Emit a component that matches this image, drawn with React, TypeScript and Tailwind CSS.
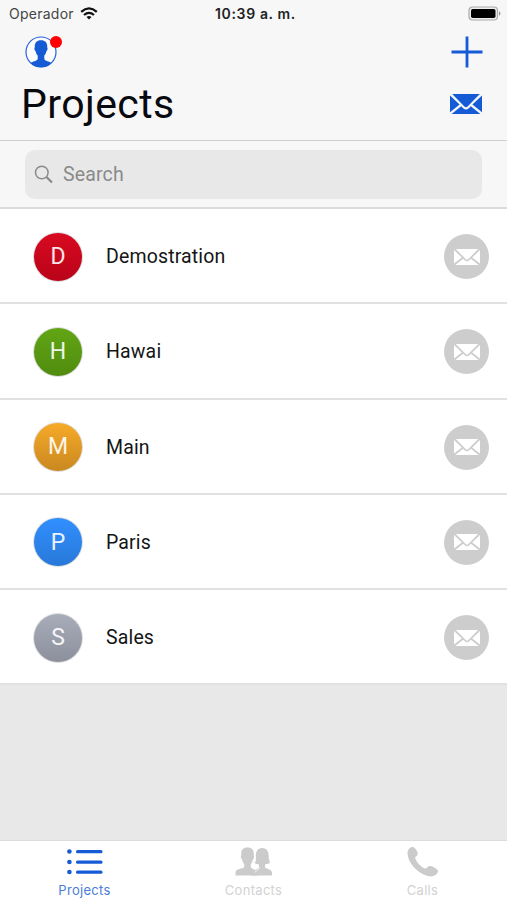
import React from "react";

const projects = [
  { name: "Demostration", color: "from-[#d80b21] to-[#b90319]" },
  { name: "Hawai", color: "from-[#61a615] to-[#508c0e]" },
  { name: "Main", color: "from-[#f6aa28] to-[#ca8820]" },
  { name: "Paris", color: "from-[#318fff] to-[#2879d8]" },
  { name: "Sales", color: "from-[#a8adba] to-[#8c909c]" },
];

function Envelope({ className }: { className: string }) {
  return (
    <svg viewBox="0 0 32 20" preserveAspectRatio="none" className={className} fill="currentColor">
      <path d="M2.2 0h27.6L17.600 12.600q-1.600 1.500-3.200 0z" />
      <path d="M0 1.400 9.600 10.600 0 18.200zM32 1.400 22.400 10.600 32 18.200z" />
      <path d="M1.600 20 11.200 12.200l2 2q2.800 2.500 5.600 0l2-2L30.400 20z" />
    </svg>
  );
}

function Wifi() {
  return (
    <svg viewBox="0 0 18 13" className="ml-[6px] h-[13px] w-[18px]" fill="none" stroke="#111" strokeWidth="2.3">
      <path d="M1.2 4.8Q9-2 16.8 4.8M4 8Q9 3.7 14 8" />
      <path d="M9 12.4 6.5 9.9Q9 8 11.5 9.9z" fill="#111" stroke="none" />
    </svg>
  );
}

function Profile() {
  return (
    <div className="relative h-8 w-8">
      <svg viewBox="0 0 32 32" className="h-8 w-8">
        <circle cx="16" cy="16" r="15" fill="#fbfbfb" stroke="#2764d8" strokeWidth="1.2" />
        <path
          d="M16 4.200c4.600 0 6.600 2.900 6.200 7.200.8.500.300 3.300-.7 3.600-.5 2.200-1.200 3.500-2.200 4.600v3.300c.6 2.300 5.200 2.100 7.300 4.100A15.200 15.200 0 0 1 5.400 27c2.100-2 6.700-1.800 7.300-4.100v-3.300c-1-1.100-1.700-2.400-2.200-4.600-1-.3-1.500-3.100-.7-3.600-.4-4.300 1.600-7.200 6.200-7.200z"
          fill="#155bd5"
        />
      </svg>
      <span className="absolute top-0 left-[25px] h-[12px] w-[12px] rounded-full bg-[#ff0007]" />
    </div>
  );
}

function ListIcon() {
  return (
    <svg viewBox="0 0 36 27" className="h-[27px] w-9" fill="#155bd5">
      <circle cx="2.400" cy="3.500" r="2.300" />
      <circle cx="2.400" cy="14" r="2.300" />
      <circle cx="2.400" cy="24" r="2.300" />
      <rect x="9" y="2" width="26.500" height="3.200" rx="1.500" />
      <rect x="9" y="12.500" width="26.500" height="3.200" rx="1.500" />
      <rect x="9" y="22.500" width="26.500" height="3.200" rx="1.500" />
    </svg>
  );
}

function PeopleIcon() {
  return (
    <svg viewBox="0 0 38 29" className="h-[29px] w-[38px]" fill="#cbcbcb">
      <path d="M27 1c5 0 6.700 3.500 6.700 8.500 0 3 .8 4.500 1.300 6-1.500 1.500-3.500 1.800-5 1.900v3.100c2 1.700 7 1.800 7 5.500v2.500H17v-2c1-3.500 5.500-4 7-6v-3.100c-1.500-.1-3.500-.4-4.500-1.700.8-2 1.300-3.500 1.300-6.200 0-5 1.700-8.500 6.200-8.500z" />
      <path
        d="M12.500.600c5 0 6.700 3 6.200 7.700 1 .6.400 3.500-.7 4-.4 2.400-1.200 3.500-2.200 4.600v3.400c1.200 2 5.500 2.200 6.200 4.500v3.700H.500v-3c0-3.800 7.200-3.700 8.700-5.200v-3.400c-1-1.100-1.800-2.200-2.200-4.600-1.100-.5-1.700-3.400-.7-4C5.800 3.600 7.500.6 12.500.6z"
      />
      <path d="M19.500 25.500 25.500 20.500M20.500 9v6" stroke="white" strokeWidth=".7" />
    </svg>
  );
}

function PhoneIcon() {
  return (
    <svg viewBox="0 0 32 32" className="h-8 w-8" fill="#cbcbcb">
      <path d="M2 2.800C3.800 1 5.500.600 6.800 1.400c1.900 1.200 3.500 3.600 3.900 5.700.3 1.600-.4 2.600-1.800 3.400-.8.500-.9 1.200-.5 2.200 1.700 4 5 7.500 8.700 9.500 1.200.6 2 .5 2.800-.4 1.500-1.700 3.300-2.300 5.500-1.200 2 1 4.200 2.300 5.100 3.300 1 1.200.5 2.400-.7 3.800-2.800 3.300-7.100 3.500-12.300 1.100C8.900 24.900 1.800 17.300.7 8.700.3 6.200.6 4.300 2 2.800z" />
    </svg>
  );
}

export default function App() {
  return (
    <div className="flex h-[900px] w-[507px] flex-col overflow-hidden bg-[#e8e8e8] font-['Roboto',sans-serif]">
      <header className="h-[141px] shrink-0 border-b border-[#d0d0d0] bg-[#f7f7f7]">
        <div className="grid h-[27px] grid-cols-[1fr_auto_1fr] items-center pr-[5px] pl-[9px] font-['Inter',sans-serif]">
          <div className="flex items-center text-[14px] text-[#444]">
            <span className="tracking-[0.250px]">Operador</span>
            <Wifi />
          </div>
          <span className="text-[14px] font-semibold tracking-[0.650px] text-[#222]">10:39 a. m.</span>
          <svg viewBox="0 0 34 16" className="h-4 w-[34px] justify-self-end">
            <rect x="1" y="1" width="28.500" height="13" rx="3.500" fill="#eee" stroke="#aaa" strokeWidth="1.200" />
            <rect x="3" y="3" width="24.500" height="9" rx="1.800" fill="#000" />
            <path d="M31 5q3 2.500 0 5z" fill="#999" />
          </svg>
        </div>
        <div className="flex h-[50px] items-center justify-between pr-6 pl-[25px]">
          <Profile />
          <svg viewBox="0 0 32 32" className="h-8 w-8" fill="none" stroke="#155bd5" strokeWidth="2.800">
            <path d="M16 .500v31M.500 16h31" />
          </svg>
        </div>
        <div className="flex h-[54px] items-center justify-between pr-[25px] pl-[21px]">
          <h1 className="text-[41px] leading-[52px] tracking-[0.400px] text-[#080a10]">Projects</h1>
          <Envelope className="h-5 w-8 text-[#155bd5]" />
        </div>
      </header>
      <div className="h-[68px] shrink-0 border-b-2 border-[#dadada] bg-[#f7f7f7] px-[25px] pt-[9px]">
        <div className="flex h-[49px] items-center rounded-[10px] bg-[#e8e8e8] pl-[9px] text-[#8a8a8a]">
          <svg viewBox="0 0 20 20" className="h-5 w-5" fill="none" stroke="currentColor">
            <circle cx="7.800" cy="7.500" r="6.300" strokeWidth="1.500" />
            <path d="m12.500 12 5.500 5.500" strokeWidth="2.200" />
          </svg>
          <span className="ml-[9px] text-[19.500px] tracking-[0.150px]">Search</span>
        </div>
      </div>
      <main>
        {projects.map((p) => (
          <div key={p.name} className="flex h-[95.250px] items-center border-b-2 border-[#e1e1e1] bg-white pt-[2px] pr-[18px] pl-[33px]">
            <div className="h-[50px] w-[50px] rounded-full bg-[#dedede] p-px">
              <div className={`flex h-12 w-12 items-center justify-center rounded-full bg-linear-to-b pt-px text-[23px] text-white/90 ${p.color}`}>
                {p.name[0]}
              </div>
            </div>
            <span className="ml-[23px] flex-1 text-[19.500px] tracking-[0.150px] text-[#151515]">{p.name}</span>
            <div className="flex h-[45px] w-[45px] items-center justify-center rounded-full bg-[#cdcdcd]">
              <Envelope className="h-4 w-[26px] text-white" />
            </div>
          </div>
        ))}
      </main>
      <nav className="mt-auto grid h-[60px] shrink-0 grid-cols-3 border-t border-[#dcdcdc] bg-white text-[13px] leading-[16px] tracking-[0.300px] text-[#d2d2d2] font-['Inter',sans-serif]">
        <div className="flex flex-col items-center text-[#4b7dd8]">
          <div className="flex h-[41px] items-center"><ListIcon /></div>
          <span>Projects</span>
        </div>
        <div className="flex flex-col items-center">
          <div className="flex h-[41px] items-center"><PeopleIcon /></div>
          <span>Contacts</span>
        </div>
        <div className="flex flex-col items-center">
          <div className="flex h-[41px] items-center"><PhoneIcon /></div>
          <span>Calls</span>
        </div>
      </nav>
    </div>
  );
}
